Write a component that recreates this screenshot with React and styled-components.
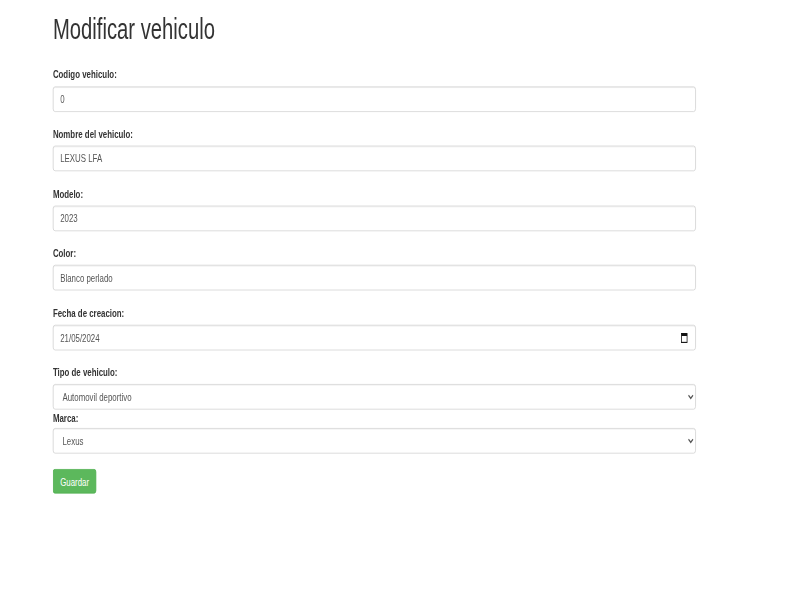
import React from "react";
import styled, { createGlobalStyle } from "styled-components";

// The reference was taken on a wide window and squeezed to 800x600,
// so the form is laid out at its native size and scaled down as a whole.
const GlobalStyle = createGlobalStyle`
  html, body {
    margin: 0;
    padding: 0;
    background: #ffffff;
    overflow: hidden;
  }
  * {
    box-sizing: border-box;
  }
`;

const Viewport = styled.div`
  width: 800px;
  height: 600px;
  overflow: hidden;
`;

const Page = styled.div`
  width: 1422px;
  height: 750px;
  padding-left: 94px;
  transform: scale(0.5625, 0.8);
  transform-origin: 0 0;
  font-family: "Liberation Sans", Arial, sans-serif;
  font-size: 14px;
  color: #333333;
`;

const Content = styled.div`
  width: 1143px;
  display: flex;
  flex-direction: column;
`;

const Title = styled.h1`
  margin: 17px 0 26px;
  font-size: 36px;
  font-weight: 500;
  line-height: 1.1;
  color: #333333;
`;

const Form = styled.form`
  display: flex;
  flex-direction: column;
`;

const Group = styled.div`
  display: flex;
  flex-direction: column;
  margin-bottom: ${(props) => (props.tight ? "0" : "17.5px")};
`;

const Label = styled.label`
  display: block;
  font-weight: 700;
  font-size: 14px;
  line-height: 20px;
  margin-bottom: ${(props) => (props.tight ? "3px" : "5px")};
`;

const Input = styled.input`
  width: 100%;
  height: 32px;
  padding: 6px 12px;
  font-family: inherit;
  font-size: 14px;
  color: #555555;
  background: #ffffff;
  border: 1px solid #cccccc;
  border-radius: 4px;
  box-shadow: inset 0 1px 1px rgba(0, 0, 0, 0.075);
  outline: none;
`;

const DateWrap = styled.div`
  position: relative;
`;

const CalendarIcon = styled.svg`
  position: absolute;
  right: 14px;
  top: 10px;
  width: 13px;
  height: 13px;
`;

const Select = styled.select`
  width: 100%;
  height: 32px;
  padding: 6px 12px;
  font-family: inherit;
  font-size: 14px;
  color: #555555;
  background: #ffffff;
  border: 1px solid #cccccc;
  border-radius: 4px;
  box-shadow: inset 0 1px 1px rgba(0, 0, 0, 0.075);
  outline: none;
`;

const Button = styled.button`
  align-self: flex-start;
  margin-top: 19px;
  height: 31px;
  padding: 0 12px;
  font-family: inherit;
  font-size: 14px;
  color: #ffffff;
  background: #5cb85c;
  border: 1px solid #4cae4c;
  border-radius: 4px;
  cursor: pointer;
`;

const fields = [
  { id: "codigo", label: "Codigo vehiculo:", value: "0" },
  { id: "nombre", label: "Nombre del vehiculo:", value: "LEXUS LFA" },
  { id: "modelo", label: "Modelo:", value: "2023" },
  { id: "color", label: "Color:", value: "Blanco perlado" },
];

const App = () => {
  return (
    <>
      <GlobalStyle />
      <Viewport>
        <Page>
          <Content>
            <Title>Modificar vehiculo</Title>
            <Form onSubmit={(e) => e.preventDefault()}>
              {fields.map((f) => (
                <Group key={f.id}>
                  <Label htmlFor={f.id}>{f.label}</Label>
                  <Input id={f.id} defaultValue={f.value} />
                </Group>
              ))}

              <Group>
                <Label htmlFor="fecha">Fecha de creacion:</Label>
                <DateWrap>
                  <Input id="fecha" defaultValue="21/05/2024" />
                  <CalendarIcon viewBox="0 0 13 13">
                    <rect x="1.5" y="1" width="10" height="11" fill="none" stroke="#111" strokeWidth="1.4" />
                    <rect x="1.5" y="1" width="10" height="3" fill="#111" />
                  </CalendarIcon>
                </DateWrap>
              </Group>

              <Group tight>
                <Label htmlFor="tipo">Tipo de vehiculo:</Label>
                <Select id="tipo" defaultValue="deportivo">
                  <option value="deportivo">Automovil deportivo</option>
                  <option value="sedan">Sedan</option>
                </Select>
              </Group>

              <Group tight>
                <Label htmlFor="marca" tight>
                  Marca:
                </Label>
                <Select id="marca" defaultValue="lexus">
                  <option value="lexus">Lexus</option>
                  <option value="toyota">Toyota</option>
                </Select>
              </Group>

              <Button type="submit">Guardar</Button>
            </Form>
          </Content>
        </Page>
      </Viewport>
    </>
  );
};

export default App;
